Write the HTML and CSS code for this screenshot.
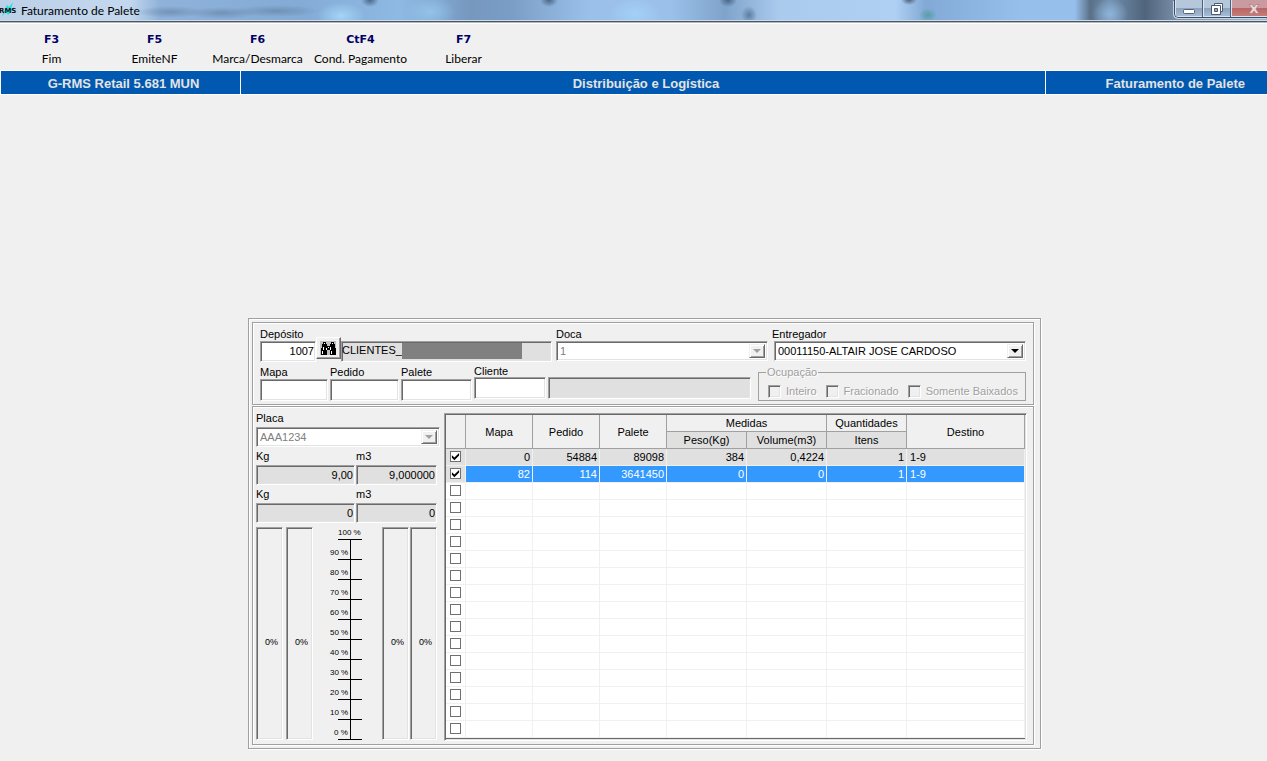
FILE: index.html
```html
<!DOCTYPE html>
<html lang="pt-BR">
<head>
<meta charset="utf-8">
<title>Faturamento de Palete</title>
<link rel="stylesheet" href="styles.css">
</head>
<body>
<header class="titlebar">
  <svg class="app-icon" viewBox="0 0 17 16" width="17" height="16" aria-hidden="true"><path d="M2 15L7 4l2 2 4-5-2 7 4-1-7 7-2-3z" fill="#25e0de"/><text x="-1" y="12" class="app-icon-text">RMS</text></svg>
  <h1 class="window-title">Faturamento de Palete</h1>
  <div class="window-buttons">
    <button class="wbtn" aria-label="Minimizar"><svg width="14" height="12" viewBox="0 0 14 12"><rect x="1.5" y="6.5" width="11" height="4" rx="1" fill="#fff" stroke="#54647c"/></svg></button>
    <button class="wbtn" aria-label="Restaurar"><svg width="14" height="14" viewBox="0 0 14 14"><path d="M4.500 1.500h8v8h-8z" fill="#fff" stroke="#4c586c"/><path d="M1.500 3.500h9v9h-9z" fill="#fff" stroke="#4c586c"/><path d="M4.500 6.500h3v3h-3z" fill="#8fa9c8" stroke="#4c586c"/></svg></button>
    <button class="wbtn wbtn-close" aria-label="Fechar"><svg width="12" height="12" viewBox="0 0 12 12"><path d="M1 1.500h3l2 2.500 2-2.500h3L7.800 6l3.200 4.500H8L6 8l-2 2.500H1L4.200 6z" fill="#ead6d8" stroke="#a87c83" stroke-width=".7"/></svg></button>
  </div>
</header>
<nav class="toolbar">
  <button class="tool"><b>F3</b><span>Fim</span></button>
  <button class="tool"><b>F5</b><span>EmiteNF</span></button>
  <button class="tool"><b>F6</b><span>Marca/Desmarca</span></button>
  <button class="tool"><b>CtF4</b><span>Cond. Pagamento</span></button>
  <button class="tool"><b>F7</b><span>Liberar</span></button>
</nav>
<div class="banner">
  <div class="banner-cell">G-RMS Retail 5.681 MUN</div>
  <div class="banner-cell">Distribuição e Logística</div>
  <div class="banner-cell banner-last">Faturamento de Palete</div>
</div>
<main class="workspace">
<form class="form etched">
  <section class="filters etched">
    <div class="filter-row main-row">
      <div class="field">
        <label for="deposito">Depósito</label>
        <div class="lookup">
          <input id="deposito" class="box num lookup-code" value="1007">
          <button type="button" class="find" aria-label="Procurar depósito"><svg width="17" height="15" viewBox="0 0 17 15" shape-rendering="crispEdges"><path d="M0 0h16v14H0z" fill="#c0c0c0"/><path d="M3 1h3v2h1v2h3V3h1V1h3v2h1v4h1v7h-6v-5H7v5H1V7h1V3h1z" fill="#000"/><path d="M4 2h1v1H4zM12 2h1v1h-1zM3 6h1v3H3zM6 7h1v2H6zM10 6h1v3h-1zM2 10h1v3H2zM11 10h1v3h-1zM8 6h1v1H8z" fill="#fff"/></svg></button>
          <output class="box filled lookup-name" for="deposito">CLIENTES_<span class="mask"></span></output>
        </div>
      </div>
      <div class="field">
        <label for="doca">Doca</label>
        <div class="combo box disabled"><select id="doca" disabled><option>1</option></select><span class="arrow"></span></div>
      </div>
      <div class="field">
        <label for="entregador">Entregador</label>
        <div class="combo box combo-inset"><select id="entregador"><option>00011150-ALTAIR JOSE CARDOSO</option></select><span class="arrow"></span></div>
      </div>
    </div>
    <div class="filter-row sub-row">
      <div class="field"><label for="mapa">Mapa</label><input id="mapa" class="box"></div>
      <div class="field"><label for="pedido">Pedido</label><input id="pedido" class="box"></div>
      <div class="field"><label for="palete">Palete</label><input id="palete" class="box"></div>
      <div class="field tight"><label for="cliente">Cliente</label><input id="cliente" class="box"></div>
      <div class="field tight client-name"><input class="box filled" aria-label="Nome do cliente" readonly></div>
      <fieldset class="occupation">
        <legend>Ocupação</legend>
        <label><input type="checkbox" class="sunk-check" disabled>Inteiro</label>
        <label><input type="checkbox" class="sunk-check" disabled>Fracionado</label>
        <label><input type="checkbox" class="sunk-check" disabled>Somente Baixados</label>
      </fieldset>
    </div>
  </section>
  <section class="details etched">
    <div class="vehicle">
      <div class="field">
        <label for="placa">Placa</label>
        <div class="combo box disabled"><select id="placa" disabled><option>AAA1234</option></select><span class="arrow"></span></div>
      </div>
      <div class="pair">
        <div class="field"><label for="kg1">Kg</label><input id="kg1" class="box filled num" value="9,00" readonly></div>
        <div class="field"><label for="m31">m3</label><input id="m31" class="box filled num" value="9,000000" readonly></div>
      </div>
      <div class="pair">
        <div class="field"><label for="kg2">Kg</label><input id="kg2" class="box filled num" value="0" readonly></div>
        <div class="field"><label for="m32">m3</label><input id="m32" class="box filled num" value="0" readonly></div>
      </div>
      <div class="gauges">
        <div class="gauge-pair wide"><div class="gauge">0%</div><div class="gauge">0%</div></div>
        <ol class="scale">
          <li class="full">100 %</li><li>90 %</li><li>80 %</li><li>70 %</li><li>60 %</li><li>50 %</li><li>40 %</li><li>30 %</li><li>20 %</li><li>10 %</li><li class="zero">0 %</li>
        </ol>
        <div class="gauge-pair"><div class="gauge">0%</div><div class="gauge">0%</div></div>
      </div>
    </div>
    <div class="grid-frame">
      <table class="pallets">
        <colgroup><col class="c-check"><col class="c-id"><col class="c-id"><col class="c-id"><col class="c-val"><col class="c-val"><col class="c-val"><col></colgroup>
        <thead>
          <tr><th rowspan="2"></th><th rowspan="2">Mapa</th><th rowspan="2">Pedido</th><th rowspan="2">Palete</th><th colspan="2">Medidas</th><th>Quantidades</th><th rowspan="2">Destino</th></tr>
          <tr><th class="sub">Peso(Kg)</th><th class="sub">Volume(m3)</th><th class="sub">Itens</th></tr>
        </thead>
        <tbody>
          <tr class="marked"><td><input type="checkbox" class="row-check" aria-label="Linha 1" checked></td><td>0</td><td>54884</td><td>89098</td><td>384</td><td>0,4224</td><td>1</td><td>1-9</td></tr>
          <tr class="selected"><td><input type="checkbox" class="row-check" aria-label="Linha 2" checked></td><td>82</td><td>114</td><td>3641450</td><td>0</td><td>0</td><td>1</td><td>1-9</td></tr>
          <tr><td><input type="checkbox" class="row-check" aria-label="Linha 3"></td><td></td><td></td><td></td><td></td><td></td><td></td><td></td></tr>
          <tr><td><input type="checkbox" class="row-check" aria-label="Linha 4"></td><td></td><td></td><td></td><td></td><td></td><td></td><td></td></tr>
          <tr><td><input type="checkbox" class="row-check" aria-label="Linha 5"></td><td></td><td></td><td></td><td></td><td></td><td></td><td></td></tr>
          <tr><td><input type="checkbox" class="row-check" aria-label="Linha 6"></td><td></td><td></td><td></td><td></td><td></td><td></td><td></td></tr>
          <tr><td><input type="checkbox" class="row-check" aria-label="Linha 7"></td><td></td><td></td><td></td><td></td><td></td><td></td><td></td></tr>
          <tr><td><input type="checkbox" class="row-check" aria-label="Linha 8"></td><td></td><td></td><td></td><td></td><td></td><td></td><td></td></tr>
          <tr><td><input type="checkbox" class="row-check" aria-label="Linha 9"></td><td></td><td></td><td></td><td></td><td></td><td></td><td></td></tr>
          <tr><td><input type="checkbox" class="row-check" aria-label="Linha 10"></td><td></td><td></td><td></td><td></td><td></td><td></td><td></td></tr>
          <tr><td><input type="checkbox" class="row-check" aria-label="Linha 11"></td><td></td><td></td><td></td><td></td><td></td><td></td><td></td></tr>
          <tr><td><input type="checkbox" class="row-check" aria-label="Linha 12"></td><td></td><td></td><td></td><td></td><td></td><td></td><td></td></tr>
          <tr><td><input type="checkbox" class="row-check" aria-label="Linha 13"></td><td></td><td></td><td></td><td></td><td></td><td></td><td></td></tr>
          <tr><td><input type="checkbox" class="row-check" aria-label="Linha 14"></td><td></td><td></td><td></td><td></td><td></td><td></td><td></td></tr>
          <tr><td><input type="checkbox" class="row-check" aria-label="Linha 15"></td><td></td><td></td><td></td><td></td><td></td><td></td><td></td></tr>
          <tr><td><input type="checkbox" class="row-check" aria-label="Linha 16"></td><td></td><td></td><td></td><td></td><td></td><td></td><td></td></tr>
          <tr><td><input type="checkbox" class="row-check" aria-label="Linha 17"></td><td></td><td></td><td></td><td></td><td></td><td></td><td></td></tr>
        </tbody>
      </table>
    </div>
  </section>
</form>
</main>
</body>
</html>
```
FILE: styles.css
```css
* { box-sizing: border-box; }

body {
  margin: 0;
  background: #f0f0f0;
  color: #000;
  font: 11px/14px "Liberation Sans", Arial, sans-serif;
}

button, input, select { font: inherit; color: inherit; }

/* Title bar */
.titlebar {
  display: flex;
  align-items: flex-start;
  height: 24px;
  border-bottom: 1px solid #fff;
  background:
    linear-gradient(transparent 20px, #cfdcea 20px, #cfdcea 21px, #4a5566 21px, #4a5566 22px, #b4b9c0 22px),
    radial-gradient(ellipse 34px 6px at 170px 12px, #6683a5aa, transparent),
    radial-gradient(ellipse 36px 6px at 222px 13px, #6683a5aa, transparent),
    radial-gradient(ellipse 44px 6px at 276px 11px, #6683a5aa, transparent),
    radial-gradient(ellipse 9px 7px at 370px 0, #4a6584, transparent),
    radial-gradient(ellipse 9px 7px at 549px 0, #4a6584, transparent),
    radial-gradient(ellipse 9px 7px at 728px 0, #4a6584, transparent),
    radial-gradient(ellipse 8px 9px at 749px 15px, #5c7da1, transparent),
    radial-gradient(ellipse 8px 5px at 909px 0, #4f637c, transparent),
    radial-gradient(ellipse 9px 7px at 928px 15px, #5a9da6, transparent),
    radial-gradient(ellipse 18px 16px at 1110px 14px, #8fb4da, transparent),
    radial-gradient(ellipse 24px 14px at 341px 16px, #a4d4f7, transparent),
    radial-gradient(ellipse 26px 16px at 430px 12px, #94c2e9, transparent),
    radial-gradient(ellipse 26px 16px at 635px 14px, #a4d0f6, transparent),
    linear-gradient(90deg, #bcd0e8 0, #c3d8ee 130px, #8fb2da 160px, #83abd5 300px, #8eb9e3 400px, #7698bf 470px, #7a9dc5 510px, #9bc1ea 590px, #9bc1ea 670px, #7fa3ca 725px, #aacbee 780px, #afd0f3 895px, #83aad6 925px, #96bfec 1020px, #96bfec 1075px, #5a7088 1090px, #708eac 1110px, #50647c 1145px, #788ca5 1175px, #a2b8d1 1267px);
}
.app-icon { flex: none; margin-top: 1px; }
.app-icon-text { font: bold 7px "DejaVu Sans", Verdana, sans-serif; fill: #111; }
.window-title {
  flex: 1;
  margin: 3px 0 0 4px;
  font: 12px/16px Lato, "Open Sans", sans-serif;
}
.window-buttons {
  display: flex;
  width: 93px;
  height: 18px;
  border: solid #3e4c60;
  border-width: 0 0 1px 1px;
  border-bottom-left-radius: 5px;
  box-shadow: -1px 1px 0 #c5d4e6;
  overflow: hidden;
}
.wbtn {
  flex: 0 0 28px;
  display: flex;
  justify-content: center;
  align-items: center;
  padding: 0;
  border: 0;
  border-right: 1px solid #50607a;
  background: linear-gradient(#b5c7da 50%, #8da3bd 50%, #a9bfd6);
  box-shadow: inset 1px -1px 0 #d8e4f0;
}
.wbtn-close {
  flex: 1 0 36px;
  padding-left: 9px;
  border: 0;
  background: linear-gradient(#c99a9f 50%, #b96664 50%, #c77f7a);
}

/* Function keys */
.toolbar { display: flex; min-height: 46px; padding: 7px 0 0; }
.tool {
  flex: 0 0 103px;
  display: flex;
  flex-direction: column;
  align-items: center;
  padding: 0;
  border: 0;
  background: none;
  white-space: nowrap;
}
.tool b { color: #000066; font: bold 11px/18px "DejaVu Sans", Verdana, sans-serif; }
.tool span { font: 12px/20px Lato, "Open Sans", sans-serif; }

/* Blue banner */
.banner {
  display: grid;
  grid-template-columns: 240px 1fr 222px;
  border: solid #fff;
  border-width: 1px 0;
  background: #0058b0;
  color: #e3e3e3;
  font: bold 13px/21px "Liberation Sans", Arial, sans-serif;
  text-align: center;
}
.banner-cell { border-left: 1px solid #fff; padding: 2px 0 0 6px; white-space: nowrap; }
.banner-last { padding: 2px 22px 0 0; text-align: right; }

/* Form shell */
.workspace { padding: 223px 0 12px 22px; }
.form { width: 100%; max-width: 793px; margin: 0 auto; padding: 3px 6px 3px 3px; }
.etched {
  border: 1px solid #a0a0a0;
  box-shadow: 1px 1px 0 #fff, inset 1px 1px 0 #fff;
}

.field { display: flex; flex-direction: column; min-width: 0; }
.box {
  width: 100%;
  min-width: 0;
  height: 21px;
  padding: 1px 1px 2px;
  border: 1px solid;
  border-color: #a0a0a0 #fff #fff #a0a0a0;
  border-radius: 0;
  background: #fff;
  box-shadow: inset 1px 1px 0 #696969, inset -1px -1px 0 #e3e3e3;
  outline: 0;
}
.filled { background: #e0e0e0; }
.num { text-align: right; }

.combo { display: flex; height: 20px; padding: 2px; }
.combo select {
  flex: 1;
  min-width: 0;
  padding: 0 1px;
  border: 0;
  background: #fff;
  appearance: none;
  opacity: 1;
  outline: 0;
}
.combo.disabled select { color: #808080; }
.combo-inset { width: auto; margin-left: 2px; }
.arrow {
  flex: none;
  display: flex;
  align-items: center;
  justify-content: center;
  width: 16px;
  border: 1px solid;
  border-color: #f0f0f0 #696969 #696969 #f0f0f0;
  background: #f0f0f0;
  box-shadow: inset 1px 1px 0 #fff, inset -1px -1px 0 #a0a0a0;
}
.arrow::before {
  content: "";
  border: solid transparent;
  border-width: 4px 4px 0;
  border-top-color: #000;
}
.disabled .arrow::before { border-top-color: #a0a0a0; }

/* Filters */
.filters { padding: 4px 7px 3px; }
.filter-row { display: grid; }
.main-row { grid-template-columns: 292fr 212fr 254fr; column-gap: 4px; margin-bottom: 3px; }
.sub-row { grid-template-columns: 68fr 69fr 71fr 72fr 208fr 268fr; column-gap: 2px; align-items: start; }
.sub-row .box { height: 22px; }
.tight label { line-height: 12px; }
.client-name { padding: 12px 5px 0 0; }

.lookup { display: flex; }
.lookup-code { flex: 0 0 56px; }
.find {
  flex: none;
  width: 25px;
  height: 22px;
  margin-top: -4px;
  padding: 0 0 0 3px;
  border: 1px solid;
  border-color: #fff #696969 #696969 #fff;
  background: #f0f0f0;
  box-shadow: inset -1px -1px 0 #a0a0a0;
}
.find svg { display: block; }
.lookup-name { flex: 1; display: flex; padding: 1px 1px 2px 0; }
.mask { width: 120px; background: #808080; }

.occupation {
  display: flex;
  align-items: center;
  min-width: 0;
  height: 36px;
  margin: 0;
  padding: 2px 0 0 9px;
  border: 1px solid #a0a0a0;
  color: #a0a0a0;
  text-shadow: 1px 1px 0 #fff;
}
.occupation legend { margin-left: -2px; padding: 0 1px; font-size: 11px; line-height: 15px; }
.occupation label { display: flex; align-items: center; gap: 5px; margin-right: 9px; white-space: nowrap; }
.sunk-check {
  appearance: none;
  flex: none;
  width: 13px;
  height: 13px;
  margin: 0;
  border: 1px solid;
  border-color: #a0a0a0 #fff #fff #a0a0a0;
  background: #f0f0f0;
  box-shadow: inset 1px 1px 0 #696969, inset -1px -1px 0 #e3e3e3;
}

/* Details */
.details { display: flex; gap: 4px; margin-top: 1px; padding: 4px 6px 3px 3px; }
.vehicle { flex: 0 0 184px; display: flex; flex-direction: column; gap: 2px; }
.vehicle .field { gap: 2px; }
.vehicle .box { height: 20px; }
.pair { display: grid; grid-template-columns: 99px 81px; gap: 1px; }

.gauges { flex: 1; display: flex; gap: 17px; margin: 2px 0 1px; }
.gauge-pair { display: flex; gap: 1px; }
.gauge-pair.wide { gap: 3px; }
.gauge {
  display: flex;
  align-items: center;
  justify-content: center;
  width: 27px;
  padding: 16px 0 0 4px;
  border: 1px solid;
  border-color: #a0a0a0 #fff #fff #a0a0a0;
  box-shadow: inset 1px 1px 0 #696969, inset -1px -1px 0 #e3e3e3;
  font-size: 9px;
}
.scale { width: 35px; margin: 0; padding: 0; list-style: none; font: 8px/12px "Liberation Sans", Arial, sans-serif; }
.scale li {
  height: 20px;
  padding-top: 7px;
  white-space: nowrap;
  background:
    linear-gradient(#000, #000) 8px 100% / 24px 1px no-repeat,
    linear-gradient(#000, #000) 20px 0 / 1px 100% no-repeat;
}
.scale .full {
  height: 13px;
  padding: 0 0 0 8px;
  background: linear-gradient(#000, #000) 8px 100% / 24px 1px no-repeat;
}
.scale .zero { padding-left: 4px; }

/* Pallet table */
.grid-frame {
  flex: 1;
  min-width: 0;
  margin-top: 2px;
  padding: 1px;
  border: 1px solid;
  border-color: #a0a0a0 #fff #fff #a0a0a0;
  background: #fff;
  box-shadow: inset 1px 1px 0 #696969, inset -1px -1px 0 #e3e3e3;
}
.pallets {
  width: 100%;
  table-layout: fixed;
  border-spacing: 0;
  border-bottom: 1px solid #696969;
}
.c-check { width: 20px; }
.c-id { width: 67px; }
.c-val { width: 80px; }
.pallets th, .pallets td {
  height: 17px;
  padding: 0;
  border: solid #f0f0f0;
  border-width: 0 1px 1px 0;
  line-height: 16px;
  overflow: hidden;
  white-space: nowrap;
}
.pallets th { border-color: #a0a0a0; background: #f0f0f0; font-weight: normal; text-align: center; }
.pallets .sub { background: #e0e0e0; }
.pallets td { padding-right: 2px; text-align: right; }
.pallets td:first-child { padding: 0; text-align: center; }
.pallets td:last-child { padding: 0 0 0 3px; text-align: left; }
.marked td { background: #e0e0e0; }
.selected td { background: #3399ff; color: #fff; }
.selected td:first-child { background: #e0e0e0; }
.row-check {
  appearance: none;
  display: block;
  width: 11px;
  height: 11px;
  margin: 0 auto 1px;
  border: 1px solid #707070;
  background: #fff;
}
.row-check:checked::before {
  content: "";
  display: block;
  width: 9px;
  height: 9px;
  background: #000;
  clip-path: polygon(10% 35%, 38% 60%, 90% 10%, 90% 40%, 38% 92%, 10% 65%);
}
```
